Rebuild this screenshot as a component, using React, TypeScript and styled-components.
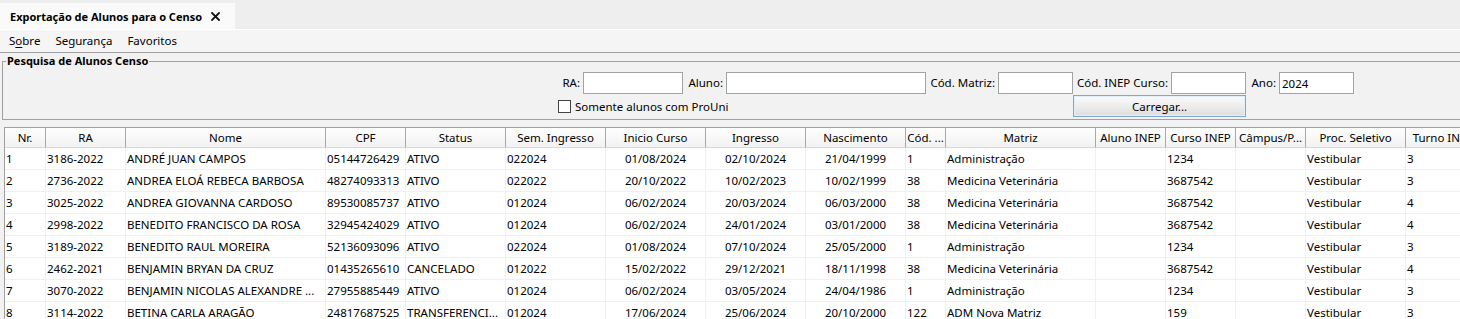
import React from 'react';
import styled, { createGlobalStyle } from 'styled-components';

const GlobalStyle = createGlobalStyle`
  html, body { margin: 0; padding: 0; background: #f2f2f2; overflow: hidden; }
  body {
    font-family: "Noto Sans", "Open Sans", sans-serif;
    font-size: 11.5px;
    color: #000;
  }
  * { box-sizing: border-box; }
`;

const Window = styled.div`
  width: 1460px;
  height: 319px;
  overflow: hidden;
  display: flex;
  flex-direction: column;
  background: #f2f2f2;
`;

const TabStrip = styled.div`
  height: 29px;
  flex: none;
  background: #eeeeee;
  display: flex;
  align-items: flex-end;
`;

const Tab = styled.div`
  height: 26px;
  width: 235px;
  flex: none;
  background: #fafafa;
  display: flex;
  align-items: center;
  gap: 9px;
  padding-left: 10px;
  font-size: 11px;
  font-weight: bold;
  white-space: nowrap;
`;

const IconBox = styled.svg`
  flex: none;
  display: block;
`;

const CloseIcon = () => (
  <IconBox width="9" height="9" viewBox="0 0 9 9">
    <path d="M1 1 L8 8 M8 1 L1 8" stroke="#111" strokeWidth="1.8" strokeLinecap="square" />
  </IconBox>
);

const MenuBar = styled.div`
  flex: none;
  height: 24px;
  border-top: 1px solid #ffffff;
  border-bottom: 1px solid #a0a0a0;
  background: #f5f5f5;
  display: flex;
  align-items: center;
  gap: 15px;
  padding-left: 9px;
`;

const MenuItem = styled.span`
  line-height: 22px;
  white-space: nowrap;
  u { text-decoration: underline; text-underline-offset: 2px; }
`;

const Group = styled.fieldset`
  flex: none;
  margin: 0 0 0 2px;
  padding: 0 0 2px 0;
  border: 1px solid #a0a0a0;
  width: 1462px;
  min-width: 0;
`;

const Legend = styled.legend`
  font-size: 11px;
  font-weight: bold;
  line-height: 16px;
  padding: 0 1px;
  margin-left: 3px;
  white-space: nowrap;
`;

const FormGrid = styled.div`
  display: grid;
  grid-template-columns: 25px 100px 43px 200px 72px 75px 98px 75px 33px 75px;
  grid-template-rows: 22px 22px;
  row-gap: 1px;
  margin: 3px 0 0 555px;
`;

const Label = styled.label`
  text-align: right;
  padding-right: 3px;
  line-height: 22px;
  white-space: nowrap;
`;

const Input = styled.input`
  width: 100%;
  height: 22px;
  margin: 0;
  border: 1px solid #a3a3a3;
  background: #ffffff;
  padding: 0 2px;
  font: inherit;
  color: #000;
  outline: none;
`;

const CheckRow = styled.label`
  grid-column: 1 / 5;
  display: flex;
  align-items: center;
  gap: 4px;
  white-space: nowrap;
`;

const CheckBox = styled.span`
  width: 13px;
  height: 13px;
  border: 1px solid #444;
  background: #fff;
  flex: none;
`;

const Button = styled.button`
  grid-column: 7 / 9;
  height: 22px;
  margin: 0;
  border: 1px solid #7ea6d6;
  box-shadow: inset 0 0 0 1px #e3eef9;
  background: linear-gradient(#fbfbfb, #ececec 55%, #dedede);
  font: inherit;
  color: #000;
  padding: 0;
`;

const TableArea = styled.div`
  flex: 1;
  margin: 7px 0 0 4px;
  border-left: 1px solid #a0a0a0;
  border-top: 1px solid #a0a0a0;
  background: #ffffff;
  overflow: hidden;
`;

type Col = { title: string; width: number; align: 'left' | 'center' };

const columns: Col[] = [
  { title: 'Nr.', width: 41, align: 'left' },
  { title: 'RA', width: 80, align: 'left' },
  { title: 'Nome', width: 200, align: 'left' },
  { title: 'CPF', width: 80, align: 'left' },
  { title: 'Status', width: 100, align: 'left' },
  { title: 'Sem. Ingresso', width: 100, align: 'left' },
  { title: 'Inicio Curso', width: 100, align: 'center' },
  { title: 'Ingresso', width: 100, align: 'center' },
  { title: 'Nascimento', width: 100, align: 'center' },
  { title: 'Cód. ...', width: 40, align: 'left' },
  { title: 'Matriz', width: 150, align: 'left' },
  { title: 'Aluno INEP', width: 70, align: 'left' },
  { title: 'Curso INEP', width: 70, align: 'left' },
  { title: 'Câmpus/P...', width: 70, align: 'left' },
  { title: 'Proc. Seletivo', width: 100, align: 'left' },
  { title: 'Turno INEP', width: 75, align: 'left' },
];

const template = columns.map((c) => `${c.width}px`).join(' ');

const Row = styled.div<{ $header?: boolean }>`
  display: grid;
  grid-template-columns: ${template};
  height: ${(p) => (p.$header ? 20 : 22)}px;
`;

const HeadCell = styled.div`
  border-right: 1px solid #a8a8a8;
  border-bottom: 1px solid #d8d8d8;
  background: linear-gradient(#fefefe, #f2f2f2);
  text-align: center;
  line-height: 19px;
  white-space: nowrap;
  overflow: hidden;
`;

const Cell = styled.div<{ $align: 'left' | 'center' }>`
  border-right: 1px solid #f0f0f0;
  border-bottom: 1px solid #f0f0f0;
  text-align: ${(p) => p.$align};
  padding-left: ${(p) => (p.$align === 'left' ? 1 : 0)}px;
  line-height: 21px;
  white-space: nowrap;
  overflow: hidden;
`;

const rows: string[][] = [
  ['1', '3186-2022', 'ANDRÉ JUAN CAMPOS', '05144726429', 'ATIVO', '022024', '01/08/2024', '02/10/2024', '21/04/1999', '1', 'Administração', '', '1234', '', 'Vestibular', '3'],
  ['2', '2736-2022', 'ANDREA ELOÁ REBECA BARBOSA', '48274093313', 'ATIVO', '022022', '20/10/2022', '10/02/2023', '10/02/1999', '38', 'Medicina Veterinária', '', '3687542', '', 'Vestibular', '3'],
  ['3', '3025-2022', 'ANDREA GIOVANNA CARDOSO', '89530085737', 'ATIVO', '012024', '06/02/2024', '20/03/2024', '06/03/2000', '38', 'Medicina Veterinária', '', '3687542', '', 'Vestibular', '4'],
  ['4', '2998-2022', 'BENEDITO FRANCISCO DA ROSA', '32945424029', 'ATIVO', '012024', '06/02/2024', '24/01/2024', '03/01/2000', '38', 'Medicina Veterinária', '', '3687542', '', 'Vestibular', '4'],
  ['5', '3189-2022', 'BENEDITO RAUL MOREIRA', '52136093096', 'ATIVO', '022024', '01/08/2024', '07/10/2024', '25/05/2000', '1', 'Administração', '', '1234', '', 'Vestibular', '3'],
  ['6', '2462-2021', 'BENJAMIN BRYAN DA CRUZ', '01435265610', 'CANCELADO', '012022', '15/02/2022', '29/12/2021', '18/11/1998', '38', 'Medicina Veterinária', '', '3687542', '', 'Vestibular', '4'],
  ['7', '3070-2022', 'BENJAMIN NICOLAS ALEXANDRE ...', '27955885449', 'ATIVO', '012024', '06/02/2024', '03/05/2024', '24/04/1986', '1', 'Administração', '', '1234', '', 'Vestibular', '3'],
  ['8', '3114-2022', 'BETINA CARLA ARAGÃO', '24817687525', 'TRANSFERENCI...', '012024', '17/06/2024', '25/06/2024', '20/10/2000', '122', 'ADM Nova Matriz', '', '159', '', 'Vestibular', '3'],
];

export default function App() {
  return (
    <Window>
      <GlobalStyle />
      <TabStrip>
        <Tab>
          <span>Exportação de Alunos para o Censo</span>
          <CloseIcon />
        </Tab>
      </TabStrip>
      <MenuBar>
        <MenuItem>S<u>o</u>bre</MenuItem>
        <MenuItem>Segurança</MenuItem>
        <MenuItem>Favoritos</MenuItem>
      </MenuBar>
      <Group>
        <Legend>Pesquisa de Alunos Censo</Legend>
        <FormGrid>
          <Label>RA:</Label>
          <Input />
          <Label>Aluno:</Label>
          <Input />
          <Label>Cód. Matriz:</Label>
          <Input />
          <Label>Cód. INEP Curso:</Label>
          <Input />
          <Label>Ano:</Label>
          <Input defaultValue="2024" />
          <CheckRow>
            <CheckBox />
            <span>Somente alunos com ProUni</span>
          </CheckRow>
          <Button>Carregar...</Button>
        </FormGrid>
      </Group>
      <TableArea>
        <Row $header>
          {columns.map((c) => (
            <HeadCell key={c.title}>{c.title}</HeadCell>
          ))}
        </Row>
        {rows.map((r) => (
          <Row key={r[0]}>
            {r.map((v, i) => (
              <Cell key={i} $align={columns[i].align}>{v}</Cell>
            ))}
          </Row>
        ))}
      </TableArea>
    </Window>
  );
}
